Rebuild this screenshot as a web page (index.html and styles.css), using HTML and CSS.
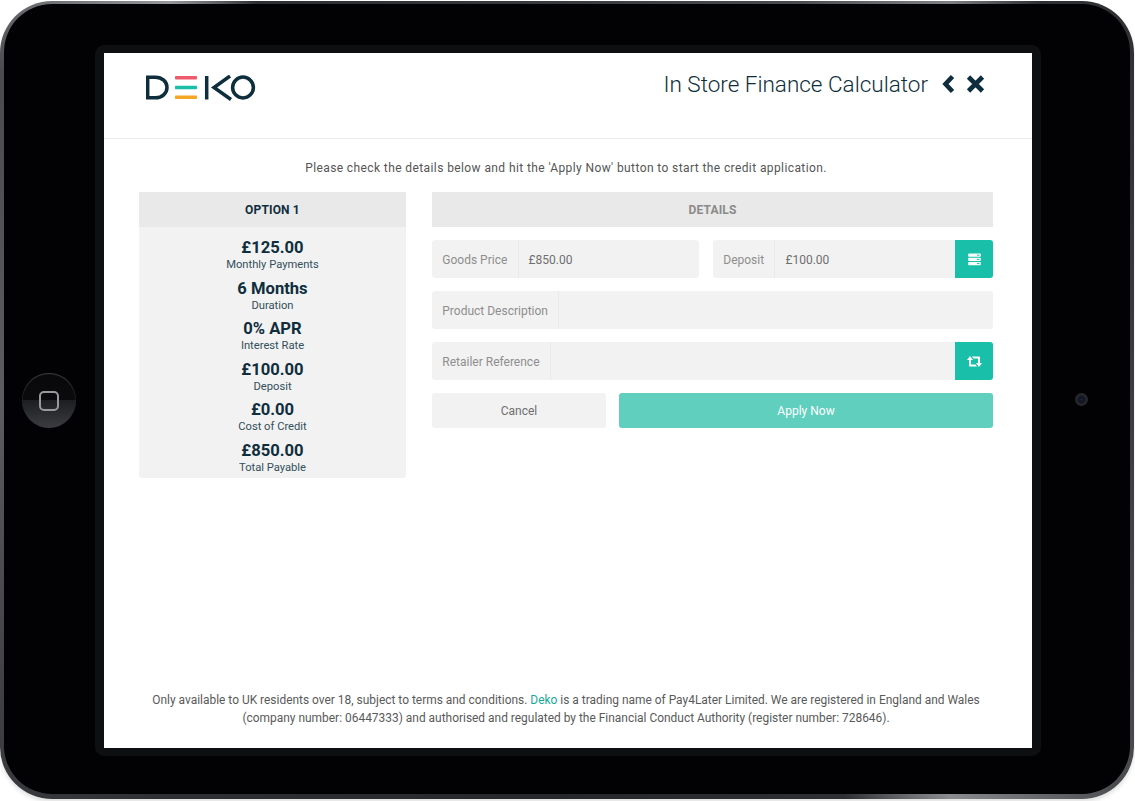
FILE: index.html
```html
<!DOCTYPE html>
<html lang="en">
<head>
<meta charset="utf-8">
<title>Deko In Store Finance Calculator</title>
<link rel="stylesheet" href="styles.css">
</head>
<body>
<div class="tablet">
  <div class="tablet-inner">
    <div class="home-button"><span class="home-square"></span></div>
    <div class="camera"></div>
    <div class="bezel">
      <main class="screen">
        <header class="topbar">
          <svg class="logo" width="110" height="26" viewBox="0 0 110 26" role="img" aria-label="Deko">
            <path class="logo-stroke" d="M1.700 2.200V22.800H9.500C16 22.800 21 18.300 21 12.500S16 2.200 9.500 2.200Z"/>
            <rect class="bar-red" x="29" y="1" width="22" height="3.600" rx="0.800"/>
            <rect class="bar-green" x="29" y="10.700" width="22" height="3.600" rx="0.800"/>
            <rect class="bar-orange" x="29" y="20.400" width="22" height="3.600" rx="0.800"/>
            <path class="logo-stroke" d="M60.700 1V24.500M84 1L68 12.500L85 24.500"/>
            <circle class="logo-stroke" cx="97" cy="12.500" r="10.400"/>
          </svg>
          <div class="title-group">
            <h1 class="title">In Store Finance Calculator</h1>
            <svg class="nav-icon nav-back" width="13" height="20" viewBox="0 0 13 20" aria-label="Back"><path d="M10.500 2.500 3.500 10 10.500 17.500"/></svg>
            <svg class="nav-icon" width="19" height="20" viewBox="0 0 19 20" aria-label="Close"><path d="M2.500 3 16.500 17M16.500 3 2.500 17"/></svg>
          </div>
        </header>
        <p class="intro">Please check the details below and hit the 'Apply Now' button to start the credit application.</p>
        <div class="columns">
          <section class="option">
            <h2 class="panel-head">OPTION 1</h2>
            <div class="stats">
              <div class="stat"><div class="stat-value">£125.00</div><div class="stat-label">Monthly Payments</div></div>
              <div class="stat"><div class="stat-value">6 Months</div><div class="stat-label">Duration</div></div>
              <div class="stat"><div class="stat-value">0% APR</div><div class="stat-label">Interest Rate</div></div>
              <div class="stat"><div class="stat-value">£100.00</div><div class="stat-label">Deposit</div></div>
              <div class="stat"><div class="stat-value">£0.00</div><div class="stat-label">Cost of Credit</div></div>
              <div class="stat"><div class="stat-value">£850.00</div><div class="stat-label">Total Payable</div></div>
            </div>
          </section>
          <section class="details">
            <h2 class="panel-head panel-head-muted">DETAILS</h2>
            <div class="row row-split">
              <div class="field field-goods"><span class="field-label">Goods Price</span><span class="field-value">£850.00</span></div>
              <div class="field">
                <span class="field-label">Deposit</span><span class="field-value">£100.00</span>
                <button class="field-btn" aria-label="Deposit options">
                  <svg width="13" height="13" viewBox="0 0 13 13"><path class="icon-fill" d="M1 .5H12a.8.8 0 0 1 .8.8V3a.8.8 0 0 1-.8.8H1A.8.8 0 0 1 .2 3V1.300A.8.8 0 0 1 1 .5ZM1 4.700H12a.8.8 0 0 1 .8.8V7.200a.8.8 0 0 1-.8.8H1A.8.8 0 0 1 .2 7.200V5.500A.8.8 0 0 1 1 4.700ZM1 8.900H12a.8.8 0 0 1 .8.8v1.700a.8.8 0 0 1-.8.8H1a.8.8 0 0 1-.8-.8V9.700A.8.8 0 0 1 1 8.900Z"/><path class="icon-cut" d="M9 2.150h2.500M9 6.350h2.500M9 10.550h2.500"/></svg>
                </button>
              </div>
            </div>
            <div class="row">
              <div class="field"><span class="field-label">Product Description</span><span class="field-value"></span></div>
            </div>
            <div class="row">
              <div class="field">
                <span class="field-label">Retailer Reference</span><span class="field-value"></span>
                <button class="field-btn" aria-label="Refresh reference">
                  <svg width="15" height="11" viewBox="0 0 15 11"><path class="icon-fill" d="M3 0 6 4H4V8.500H8.500L10 10.500H2.900A.9.900 0 0 1 2 9.600V4H0ZM12 11 9 7H11V2.500H6.500L5 .5H12.100A.9.900 0 0 1 13 1.400V7H15Z"/></svg>
                </button>
              </div>
            </div>
            <div class="row row-actions">
              <button class="btn btn-cancel">Cancel</button>
              <button class="btn btn-apply">Apply Now</button>
            </div>
          </section>
        </div>
        <footer class="legal">Only available to UK residents over 18, subject to terms and conditions. <a class="legal-link" href="#">Deko</a> is a trading name of Pay4Later Limited. We are registered in England and Wales<br>(company number: 06447333) and authorised and regulated by the Financial Conduct Authority (register number: 728646).</footer>
      </main>
    </div>
  </div>
</div>
</body>
</html>
```
FILE: styles.css
```css
* { box-sizing: border-box; }

html, body { margin: 0; height: 100%; }

body {
  background: #fff;
  font-family: Roboto, "Liberation Sans", sans-serif;
  overflow: hidden;
}

.tablet {
  width: 1134px;
  height: 798px;
  margin-top: 1px;
  padding: 3px 4px 5px 4px;
  border-radius: 52px;
  background: conic-gradient(
    #3a3b3e 0deg, #4a4b4e 30deg, #7f8084 44deg, #2e2f32 50deg, #3c3d40 90deg,
    #4a4b4e 125deg, #8a8b8f 136deg, #2e2f32 145deg, #26272a 180deg,
    #2e2f32 225deg, #5c5d60 270deg, #4a4b4e 300deg, #97989c 315deg, #2e2f32 322deg, #3a3b3e 360deg);
  box-shadow: 0 3px 4px rgba(0, 0, 0, 0.12);
}

.tablet-inner {
  position: relative;
  height: 100%;
  padding: 41px 89px 38px 91px;
  border-radius: 48px;
  background: #020204;
}

.home-button {
  position: absolute;
  left: 18px;
  top: 369px;
  width: 54px;
  height: 55px;
  display: flex;
  align-items: center;
  justify-content: center;
  border-radius: 50%;
  background: linear-gradient(#08080a 0, #0b0b0d 50%, #1c1e20 50%, #3b3d41 100%);
  box-shadow: inset 0 1px 1px #3f4043;
}

.home-square {
  width: 20px;
  height: 20px;
  border: 2px solid #98999c;
  border-radius: 5px;
}

.camera {
  position: absolute;
  left: 1071px;
  top: 389px;
  width: 13px;
  height: 13px;
  border-radius: 50%;
  background: radial-gradient(circle at 50% 50%, #1c2450 0, #10131f 25%, #2a2b2e 60%, #0a0a0c 100%);
}

.bezel {
  height: 100%;
  padding: 8px 9px 8px 9px;
  border-radius: 9px;
  background: #0e0f11;
}

.screen {
  height: 100%;
  display: flex;
  flex-direction: column;
  background: #fff;
  color: #0f2e3d;
}

.topbar {
  height: 86px;
  flex: none;
  display: flex;
  justify-content: space-between;
  align-items: flex-start;
  padding: 22px 47px 0 42px;
  border-bottom: 1px solid #ececec;
}

.logo { display: block; }

.logo-stroke {
  fill: none;
  stroke: #0f2e3d;
  stroke-width: 3.500;
}

.bar-red { fill: #ef5b6c; }
.bar-green { fill: #1bbfa8; }
.bar-orange { fill: #f5a623; }

.title-group {
  display: flex;
  align-items: center;
  margin-top: -5px;
}

.title {
  margin: 0 14px 0 0;
  font-size: 22.500px;
  line-height: 28px;
  font-weight: 300;
  color: #0f2e3d;
}

.nav-icon {
  fill: none;
  stroke: #0f2e3d;
  stroke-width: 4.600;
}

.nav-back { margin-right: 11px; }

.intro {
  margin: 21px 0 15px;
  padding-right: 4px;
  text-align: center;
  font-size: 12px;
  line-height: 17px;
  font-weight: 400;
  letter-spacing: 0.400px;
  color: #555;
}

.columns {
  display: grid;
  grid-template-columns: 267px 561px;
  column-gap: 26px;
  padding-left: 35px;
  align-items: start;
}

.option {
  background: #f2f2f2;
  padding-bottom: 3px;
  border-radius: 0 0 3px 3px;
}

.panel-head {
  margin: 0;
  height: 35px;
  display: flex;
  align-items: center;
  justify-content: center;
  background: #e9e9e9;
  font-size: 12px;
  font-weight: 700;
  letter-spacing: 0.150px;
  color: #0f2e3d;
}

.panel-head-muted { color: #8a8a8a; }

.stats {
  display: flex;
  flex-direction: column;
  gap: 6.600px;
  padding-top: 11px;
  text-align: center;
}

.stat-value {
  font-size: 16.600px;
  line-height: 20px;
  font-weight: 700;
}

.stat-label {
  font-size: 11.200px;
  line-height: 14px;
  font-weight: 400;
  color: #33505c;
}

.details {
  display: flex;
  flex-direction: column;
  gap: 13px;
}

.row { display: flex; gap: 14px; }

.row-split .field-goods { flex: 0 0 267px; }

.field {
  flex: 1;
  height: 38px;
  display: flex;
  border-radius: 3px;
  background: #f2f2f2;
  font-size: 12px;
  line-height: 40px;
  overflow: hidden;
}

.field-label {
  padding: 0 10.300px;
  border-right: 1px solid #eaeaea;
  color: #8e8e8e;
  white-space: nowrap;
}

.field-value {
  flex: 1;
  padding-left: 10px;
  color: #6f6f6f;
}

.field-btn {
  width: 38px;
  border: 0;
  padding: 0;
  display: flex;
  align-items: center;
  justify-content: center;
  background: #19bfa8;
}

.icon-fill { fill: #fff; }

.icon-cut {
  fill: none;
  stroke: #19bfa8;
  stroke-width: 1;
}

.row-actions { gap: 13px; }

.btn {
  height: 35px;
  border: 0;
  border-radius: 3px;
  font-family: inherit;
  font-size: 12px;
}

.btn-cancel {
  flex: 0 0 174px;
  background: #f2f2f2;
  color: #6f6f6f;
}

.btn-apply {
  flex: 1;
  background: #60cfbe;
  color: #fff;
}

.legal {
  margin-top: auto;
  padding: 0 4px 21px 0;
  text-align: center;
  font-size: 11.950px;
  line-height: 18px;
  color: #5a5a5a;
}

.legal-link {
  color: #19a999;
  text-decoration: none;
}
```
